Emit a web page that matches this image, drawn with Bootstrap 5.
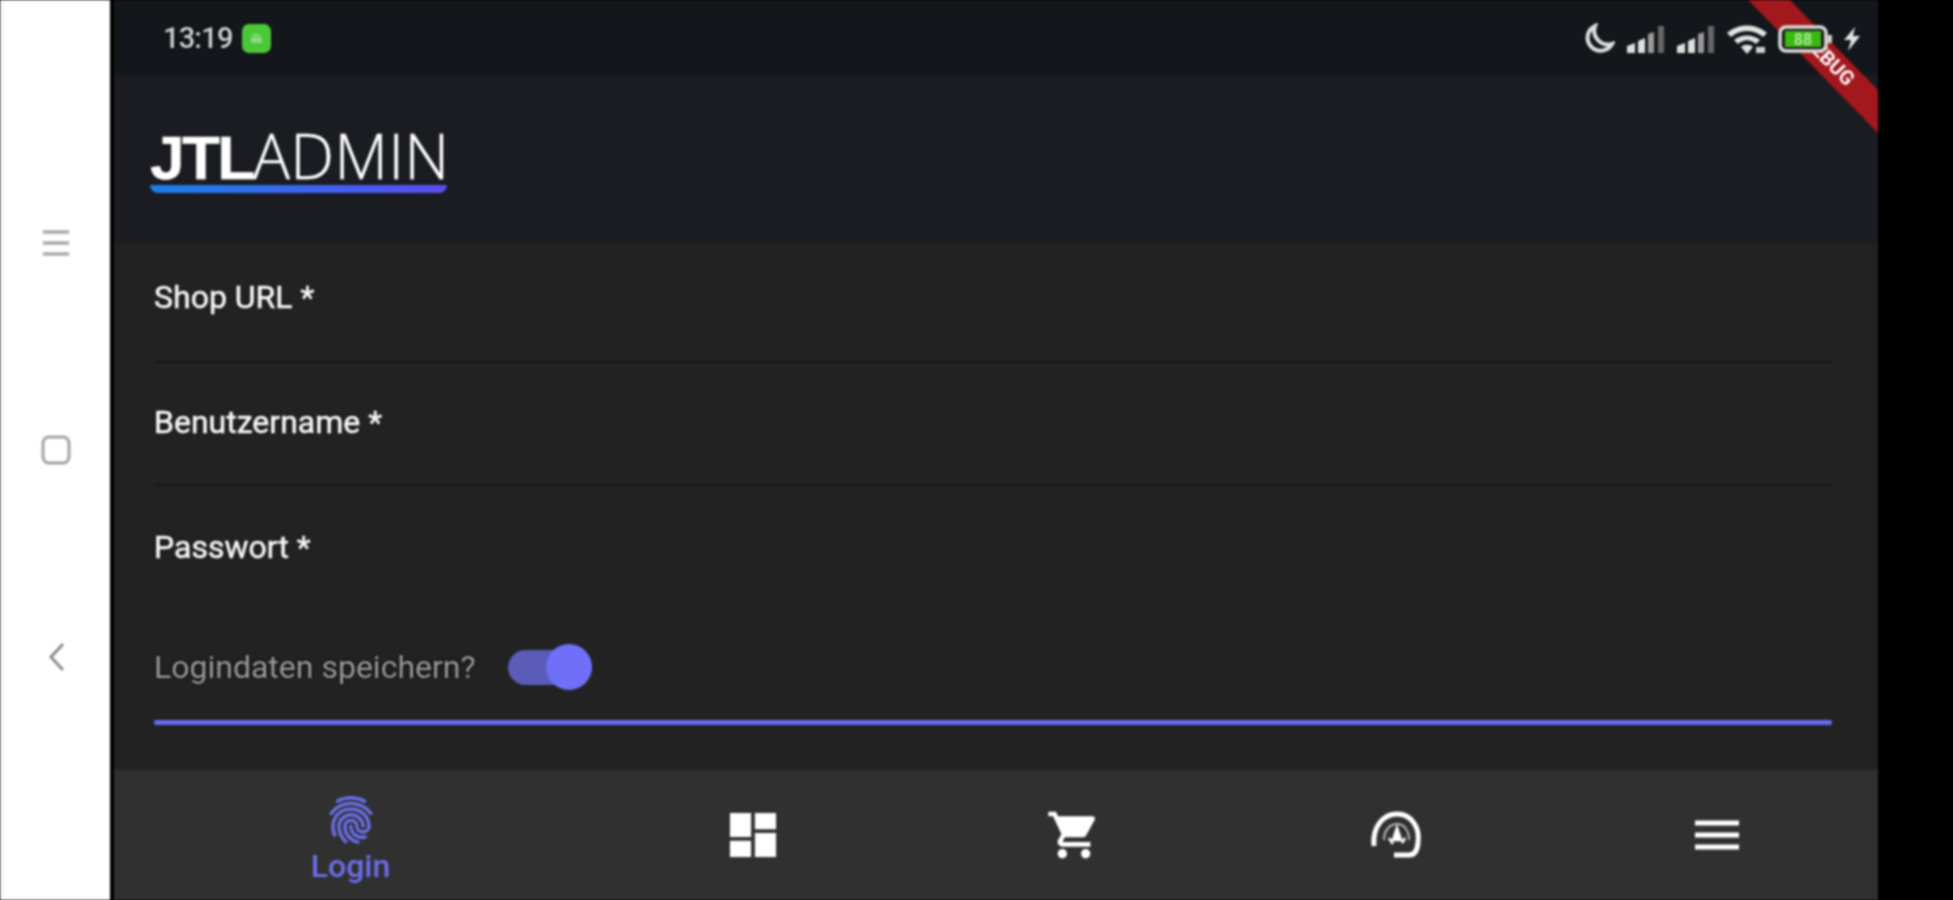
<!DOCTYPE html>
<html lang="de">
<head>
    <meta charset="UTF-8">
    <meta name="viewport" content="width=device-width, initial-scale=1.0">
    <title>JTL Admin Login</title>
    <link href="https://cdn.jsdelivr.net/npm/bootstrap@5.3.0/dist/css/bootstrap.min.css" rel="stylesheet">
    <style>
        body { background: #000; overflow: hidden; font-family: Roboto, "Liberation Sans", sans-serif; }
        .stage { width: 1953px; height: 900px; filter: blur(1px); }

        /* android nav strip on the left */
        .side-strip { width: 110px; height: 900px; background: #fff; padding: 228px 0 228px 41px; border-left: 4px solid #f6f6f6; margin-right: 4px; }
        .side-icon { width: 30px; height: 30px; display: block; margin-left: -4px; }

        .app-frame { width: 1764px; height: 900px; position: relative; overflow: hidden; }
        .end-black { width: 75px; height: 900px; background: #000; }

        .status-row { height: 75px; background: #13161a; padding-left: 49px; padding-right: 16px; padding-top: 2px; position: relative; }
        .clock { font-size: 29px; font-weight: 500; color: #d2d2d2; letter-spacing: -.8px; width: 79px; text-shadow: 0 0 3px #000; }
        .app-badge { width: 29px; height: 29px; background: #4cc73a; border-radius: 7px; }
        .status-icons { gap: 10px; position: relative; z-index: 2; }
        .moon-icon { margin-right: -3px; }
        .signal-first { margin-right: -4px; }

        .debug-banner { position: absolute; top: 0; right: 0; z-index: 1; }
        .debug-label { font-family: Roboto, sans-serif; font-size: 20px; font-weight: 700; fill: #fff; }

        .logo-row { height: 168px; background: #1a1c21; padding-left: 36px; }
        .logo-box { width: 297px; }
        .logo-text { font-family: "Open Sans", "Liberation Sans", sans-serif; font-size: 62px; line-height: 58px; color: #fff; letter-spacing: .4px; font-weight: 300; white-space: nowrap; -webkit-text-stroke: .4px #fff; }
        .logo-text b { font-family: "Liberation Sans", sans-serif; font-weight: 700; letter-spacing: -2.5px; }
        .logo-bar { height: 8px; margin-top: -2px; background: linear-gradient(90deg, #1b80ea, #5a4df2); border-radius: 0 0 8px 8px; }

        .form-area { height: 527px; background: #222; padding: 34px 46px 0 40px; }
        .field-label { font-size: 32px; line-height: 40px; font-weight: 400; color: #f6f6f6; -webkit-text-stroke: .6px #f6f6f6; text-shadow: 0 0 3px #000; }
        .field-line { border-bottom: 2px solid #151515; height: 86px; margin-bottom: 39px; }
        .field-line.faint { border-bottom-color: #1a1a1a; height: 84px; margin-bottom: 41px; }
        .field-line.last { border-bottom: 0; height: 116px; margin-bottom: 0; }
        .save-row { height: 48px; }
        .save-label { font-size: 32px; color: #9b9b9b; width: 354px; text-shadow: 0 0 3px #000; }
        .toggle-track { width: 84px; height: 35px; background: #5a5cb8; border-radius: 18px; }
        .toggle-thumb { width: 46px; height: 46px; background: #6f6ff8; border-radius: 50%; }
        .indigo-line { height: 5px; background: #6a69ee; margin-top: 29px; border-radius: 2px; }

        .bottom-nav { height: 130px; background: #303030; }
        .nav-login { width: 478px; padding-top: 22px; padding-right: 5px; }
        .nav-cell { flex: 1 1 0; }
        .login-word { font-size: 32px; line-height: 36px; font-weight: 500; color: #6b6fe6; }
    </style>
</head>
<body>
    <div class="stage d-flex">
        <!-- android soft keys -->
        <div class="side-strip d-flex flex-column justify-content-between">
            <svg class="side-icon" viewBox="0 0 30 30"><path d="M2 4h26M2 15h26M2 26h26" stroke="#a9a9a9" stroke-width="3.5"/></svg>
            <svg class="side-icon" viewBox="0 0 30 30"><rect x="2" y="2" width="26" height="26" rx="6" fill="none" stroke="#a2a2a2" stroke-width="3"/></svg>
            <svg class="side-icon" viewBox="0 0 30 30"><path d="M22 2 L10 15 L22 28" fill="none" stroke="#8d8d8d" stroke-width="3"/></svg>
        </div>

        <div class="app-frame">
            <svg class="debug-banner" width="135" height="135" viewBox="0 0 135 135">
                <polygon points="5,0 47,0 135,90 135,133" fill="#a3181c"/>
                <text class="debug-label" x="85" y="66" text-anchor="middle" transform="rotate(45 85 60)">DEBUG</text>
            </svg>

            <div class="status-row d-flex align-items-center justify-content-between">
                <div class="d-flex align-items-center">
                    <span class="clock">13:19</span>
                    <span class="app-badge d-flex align-items-center justify-content-center">
                        <svg width="17" height="17" viewBox="0 0 17 17"><path d="M3 7h11v6H3zM5 4h7v2H5z" fill="#8bdc7c"/></svg>
                    </span>
                </div>
                <div class="status-icons d-flex align-items-center">
                    <svg class="moon-icon" width="33" height="31" viewBox="0 0 33 31"><path d="M13 3 A13 13 0 1 0 30 21 A14 14 0 0 1 13 3 Z" fill="none" stroke="#dedede" stroke-width="4"/></svg>
                    <svg class="signal-first" width="44" height="30" viewBox="0 0 44 30"><path d="M5 29v-7l8-3v10zM16 29V17l7-3v15z" fill="#e0e0e0"/><path d="M26 29V10l6-2v21z" fill="#9a9a9a"/><path d="M36 29V2h6v27z" fill="#666"/></svg>
                    <svg width="44" height="30" viewBox="0 0 44 30"><path d="M5 29v-7l8-3v10zM16 29V17l7-3v15z" fill="#e0e0e0"/><path d="M26 29V10l6-2v21z" fill="#9a9a9a"/><path d="M36 29V2h6v27z" fill="#666"/></svg>
                    <svg width="42" height="30" viewBox="0 0 42 30"><path d="M1 9 C12 -1 30 -1 41 9 L37 13 C28 5 14 5 5 13 Z M8 16 C15 10 27 10 34 16 L30 20 C24 15 18 15 12 20 Z M15 23 C18 20 24 20 27 23 L21 30 Z" fill="#e2e2e2"/><rect x="30" y="23" width="9" height="6" fill="#d0d0d0"/></svg>
                    <svg width="54" height="28" viewBox="0 0 54 28"><rect x="2" y="2" width="46" height="24" rx="6" fill="#1a1d20" stroke="#dcdcdc" stroke-width="3.5"/><rect x="7" y="6" width="36" height="16" fill="#3cb812"/><text x="25" y="20" text-anchor="middle" font-family="Roboto, sans-serif" font-size="16" font-weight="700" fill="#a9e89a">88</text><path d="M50 10h4v8h-4z" fill="#cfcfcf"/></svg>
                    <svg width="20" height="24" viewBox="0 0 20 24"><path d="M13 0 L2 13 H9 L6 24 L18 9 H11 Z" fill="#e4e4e4"/></svg>
                </div>
            </div>

            <div class="logo-row d-flex align-items-center">
                <div class="logo-box">
                    <div class="logo-text"><b>JTL</b>ADMIN</div>
                    <div class="logo-bar"></div>
                </div>
            </div>

            <div class="form-area">
                <div class="field-line"><div class="field-label">Shop URL *</div></div>
                <div class="field-line faint"><div class="field-label">Benutzername *</div></div>
                <div class="field-line last"><div class="field-label">Passwort *</div></div>
                <div class="save-row d-flex align-items-center">
                    <span class="save-label">Logindaten speichern?</span>
                    <span class="toggle-track d-flex align-items-center justify-content-end">
                        <span class="toggle-thumb"></span>
                    </span>
                </div>
                <div class="indigo-line"></div>
            </div>

            <nav class="bottom-nav d-flex">
                <div class="nav-login d-flex flex-column align-items-center">
                    <svg width="56" height="56" viewBox="0 0 24 24" fill="#6b6fe6" stroke="#6b6fe6" stroke-width=".5"><path d="M17.81 4.47c-.08 0-.16-.02-.23-.06C15.66 3.42 14 3 12.01 3c-1.98 0-3.86.47-5.57 1.41-.24.13-.54.04-.68-.2-.13-.24-.04-.55.2-.68C7.82 2.52 9.86 2 12.01 2c2.13 0 3.99.47 6.03 1.52.25.13.34.43.21.67-.09.18-.26.28-.44.28zM3.5 9.72c-.1 0-.2-.03-.29-.09-.23-.16-.28-.47-.12-.7.99-1.4 2.25-2.5 3.75-3.27C9.98 4.04 14 4.03 17.15 5.65c1.5.77 2.76 1.86 3.75 3.25.16.22.11.54-.12.7-.23.16-.54.11-.7-.12-.9-1.26-2.04-2.25-3.39-2.94-2.87-1.47-6.54-1.47-9.4.01-1.36.7-2.5 1.7-3.4 2.96-.08.14-.23.21-.39.21zm6.25 12.07c-.13 0-.26-.05-.35-.15-.87-.87-1.34-1.43-2.01-2.64-.69-1.23-1.05-2.73-1.05-4.34 0-2.97 2.54-5.39 5.66-5.39s5.66 2.42 5.66 5.39c0 .28-.22.5-.5.5s-.5-.22-.5-.5c0-2.42-2.09-4.39-4.66-4.39-2.57 0-4.66 1.97-4.66 4.39 0 1.44.32 2.77.93 3.85.64 1.15 1.08 1.64 1.85 2.42.19.2.19.51 0 .71-.11.1-.24.15-.37.15zm7.17-1.85c-1.19 0-2.24-.3-3.1-.89-1.49-1.01-2.38-2.65-2.38-4.39 0-.28.22-.5.5-.5s.5.22.5.5c0 1.41.72 2.74 1.94 3.56.71.48 1.54.71 2.54.71.24 0 .64-.03 1.04-.1.27-.05.53.13.58.41.05.27-.13.53-.41.58-.57.11-1.07.12-1.21.12zM14.91 22c-.04 0-.09-.01-.13-.02-1.59-.44-2.63-1.03-3.72-2.1-1.4-1.39-2.17-3.24-2.17-5.22 0-1.62 1.38-2.94 3.08-2.94 1.7 0 3.08 1.32 3.08 2.94 0 1.07.93 1.94 2.08 1.94s2.08-.87 2.08-1.94c0-3.77-3.25-6.83-7.25-6.83-2.84 0-5.44 1.58-6.61 4.03-.39.81-.59 1.76-.59 2.8 0 .78.07 2.01.67 3.61.1.26-.03.55-.29.64-.26.1-.55-.04-.64-.29-.49-1.31-.73-2.61-.73-3.96 0-1.2.23-2.29.68-3.24 1.33-2.79 4.28-4.6 7.51-4.6 4.55 0 8.25 3.51 8.25 7.83 0 1.62-1.38 2.94-3.08 2.94s-3.08-1.32-3.08-2.94c0-1.07-.93-1.94-2.08-1.94s-2.08.87-2.08 1.94c0 1.71.66 3.31 1.87 4.51.95.94 1.86 1.46 3.27 1.85.27.07.42.35.35.61-.05.23-.26.38-.47.38z"/></svg>
                    <span class="login-word">Login</span>
                </div>
                <div class="nav-cell d-flex align-items-center justify-content-center">
                    <svg width="48" height="48" viewBox="0 0 50 48" fill="#fff"><path d="M1 1h22v25H1zM27 1h22v17H27zM1 30h22v17H1zM27 22h22v25H27z"/></svg>
                </div>
                <div class="nav-cell d-flex align-items-center justify-content-center">
                    <svg width="56" height="56" viewBox="0 0 24 24" fill="#fff"><path d="M7 18c-1.1 0-1.99.9-1.99 2S5.9 22 7 22s2-.9 2-2-.9-2-2-2zM1 2v2h2l3.6 7.59-1.35 2.45c-.16.28-.25.61-.25.96 0 1.1.9 2 2 2h12v-2H7.42c-.14 0-.25-.11-.25-.25l.03-.12.9-1.63h7.45c.75 0 1.41-.41 1.75-1.03l3.58-6.49c.08-.14.12-.31.12-.48 0-.55-.45-1-1-1H5.21l-.94-2H1zm16 16c-1.1 0-1.99.9-1.99 2s.89 2 1.99 2 2-.9 2-2-.9-2-2-2z"/></svg>
                </div>
                <div class="nav-cell d-flex align-items-center justify-content-center">
                    <svg width="54" height="50" viewBox="0 0 54 50" fill="none" stroke="#fff"><path d="M5 36 C3 16 15 4 28 4 C42 4 51 17 49 32 C48.500 40 46 45 40 45 H25" stroke-width="5"/><path d="M15 30 C15 20 21 14 28 14 C35 14 40 20 40 30" stroke-width="2" stroke="#b8b8b8"/><path d="M28 18 L24 30 L32 30 Z M36 28 L33 33 M20 28 L24 34" fill="#fff" stroke-width="2.500"/></svg>
                </div>
                <div class="nav-cell d-flex align-items-center justify-content-center">
                    <svg width="46" height="30" viewBox="0 0 46 30"><path d="M1 3h44M1 15h44M1 27h44" stroke="#fff" stroke-width="5"/></svg>
                </div>
            </nav>
        </div>
        <div class="end-black"></div>
    </div>
    <script src="https://cdn.jsdelivr.net/npm/bootstrap@5.3.0/dist/js/bootstrap.bundle.min.js"></script>
</body>
</html>
